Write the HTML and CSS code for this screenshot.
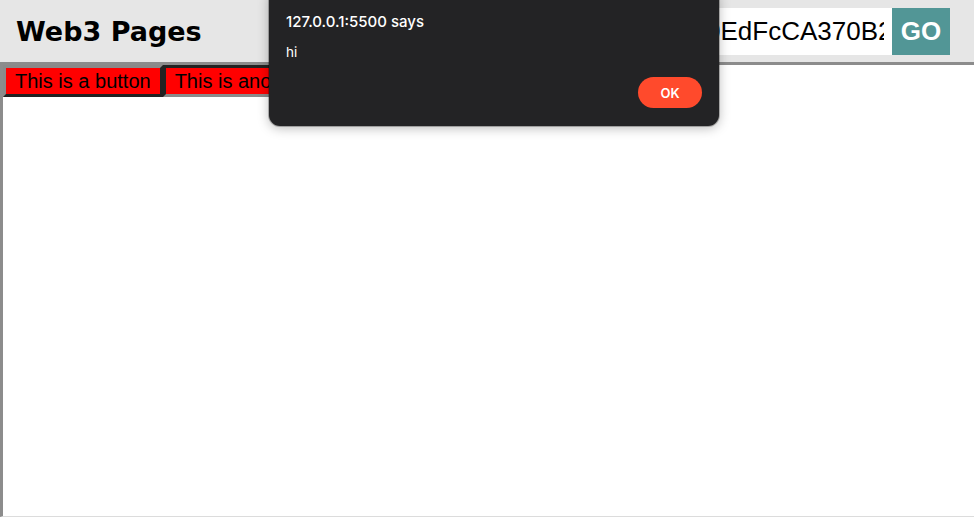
FILE: index.html
```html
<!DOCTYPE html>
<html>
<head>
<meta charset="utf-8">
<link rel="stylesheet" href="styles.css">
</head>
<body>
<header class="topbar">
  <h1 class="title">Web3 Pages</h1>
  <div class="search">
    <input class="addr" type="text" value="0EdFcCA370B2aF8c91D4e6">
    <button class="go">GO</button>
  </div>
</header>
<main class="frame">
  <div class="btnrow">
    <button class="redbtn outset">This is a button</button>
    <button class="redbtn inset">This is another button</button>
  </div>
</main>
<div class="dialog">
  <div class="dlg-title">127.0.0.1:5500 says</div>
  <div class="dlg-msg">hi</div>
  <div class="dlg-actions"><button class="ok">OK</button></div>
</div>
</body>
</html>
```

FILE: styles.css
```css
html, body {
  margin: 0;
  padding: 0;
  background: #ffffff;
  height: 100%;
  overflow: hidden;
}
body {
  display: flex;
  flex-direction: column;
  font-family: "Liberation Sans", Arial, sans-serif;
}
.topbar {
  height: 62px;
  flex: none;
  background: #e6e6e6;
  display: flex;
  align-items: center;
  justify-content: space-between;
  padding: 0 24px 0 16px;
  box-sizing: border-box;
}
.title {
  margin: 0;
  font-family: "DejaVu Sans", Verdana, sans-serif;
  font-weight: bold;
  font-size: 27px;
  color: #000;
}
.search {
  display: flex;
  height: 47px;
}
.addr {
  width: 200px;
  height: 47px;
  box-sizing: border-box;
  border: none;
  outline: none;
  background: #fff;
  padding: 0 8px 0 14px;
  font-family: "Liberation Sans", Arial, sans-serif;
  font-size: 26px;
  color: #000;
}
.go {
  width: 58px;
  height: 47px;
  border: none;
  background: #529696;
  color: #fff;
  font-family: "Liberation Sans", Arial, sans-serif;
  font-weight: bold;
  font-size: 26px;
  padding: 0;
}
.frame {
  flex: 1;
  border-top: 3px solid #8c8c8c;
  border-left: 3px solid #8c8c8c;
  border-bottom: 1px solid #dcdcdc;
  background: #fff;
}
.btnrow {
  display: flex;
}
.redbtn {
  background: #ff0000;
  color: #000;
  font-family: "Liberation Sans", Arial, sans-serif;
  font-size: 20px;
  line-height: 22px;
  padding: 2px 9px;
  border-width: 3px;
  border-style: solid;
  margin: 0;
}
.outset {
  border-color: #8a8a8a #222222 #222222 #8a8a8a;
}
.inset {
  border-color: #222222 #8a8a8a #8a8a8a #222222;
}
.dialog {
  position: absolute;
  left: 269px;
  top: -12px;
  width: 450px;
  height: 138px;
  box-sizing: border-box;
  background: #232325;
  border-radius: 11px;
  box-shadow: 0 0 0 1px rgba(0,0,0,0.25), 0 2px 12px rgba(0,0,0,0.28);
  padding: 24px 17px 18px 17px;
  display: flex;
  flex-direction: column;
  font-family: Inter, "Noto Sans", sans-serif;
  color: #fff;
}
.dlg-title {
  font-size: 15px;
  font-weight: 500;
  line-height: 20px;
}
.dlg-msg {
  margin-top: 11px;
  font-size: 13.5px;
  line-height: 18px;
}
.dlg-actions {
  margin-top: auto;
  display: flex;
  justify-content: flex-end;
}
.ok {
  width: 64px;
  height: 31px;
  border: none;
  border-radius: 16px;
  background: #ff4a2c;
  color: #fff;
  font-family: Inter, "Noto Sans", sans-serif;
  font-weight: 600;
  font-size: 13px;
  padding: 0;
}
```
